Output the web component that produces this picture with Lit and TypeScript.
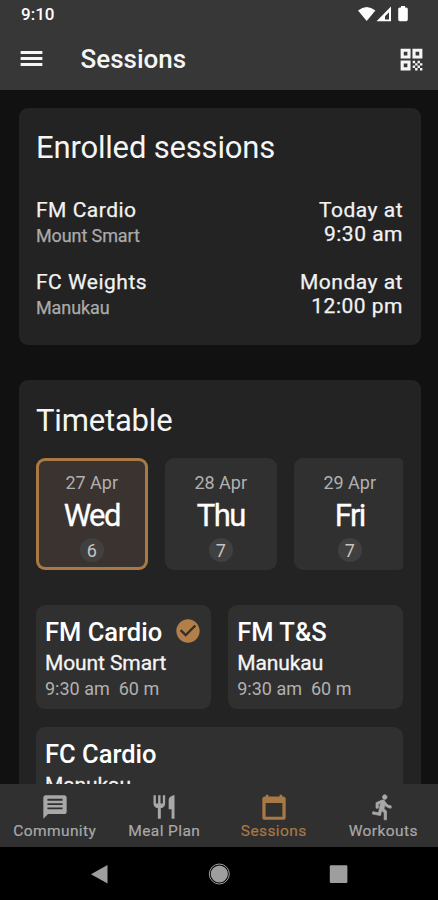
import { LitElement, html, css, svg } from "lit";
import { customElement, property } from "lit/decorators.js";
import { classMap } from "lit/directives/class-map.js";

const paths: Record<string, unknown> = {
  menu: svg`<path d="M3 18.3h18v-2.6H3v2.6zm0-5h18v-2.6H3v2.6zm0-7.6v2.6h18V5.7H3z"/>`,
  qr: svg`<path fill-rule="evenodd" d="M3 3h8.2v8.2H3zM5.6 5.6v3h3v-3zM12.8 3H21v8.2h-8.2zM15.4 5.6v3h3v-3zM3 12.8h8.2V21H3zM5.6 15.4v3h3v-3z"/><path d="M13 13h2v2h-2zM15 15h2v2h-2zM17 13h2v2h-2zM19 15h2v2h-2zM13 17h2v2h-2zM15 19h2v2h-2zM17 17h2v2h-2zM19 19h2v2h-2z"/>`,
  chat: svg`<path d="M20 2H4c-1.1 0-1.99.9-1.99 2L2 22l4-4h14c1.1 0 2-.9 2-2V4c0-1.1-.9-2-2-2zM5.5 5h13v1.6h-13zM5.5 8.7h13v1.6h-13zM5.5 12.4h13v1.6h-13z" fill-rule="evenodd"/>`,
  meal: svg`<path d="M11 9H9V2H7v7H5V2H3v7c0 2.12 1.66 3.84 3.75 3.97V22h2.5v-9.03C11.34 12.84 13 11.12 13 9V2h-2v7zm5-3v8h2.5v8H21V2c-2.76 0-5 2.24-5 4z"/>`,
  calendar: svg`<path fill-rule="evenodd" d="M20 3h-1V1.4h-2.2V3H7.2V1.4H5V3H4c-1.1 0-2 .9-2 2v16c0 1.1.9 2 2 2h16c1.1 0 2-.9 2-2V5c0-1.1-.9-2-2-2zm-.8 17.3H4.8V8.6h14.4z"/>`,
  run: svg`<path stroke="currentColor" stroke-width=".6" d="M13.49 5.48c1.1 0 2-.9 2-2s-.9-2-2-2-2 .9-2 2 .9 2 2 2zm-3.6 13.9l1-4.4 2.1 2v6h2v-7.5l-2.1-2 .6-3c1.3 1.5 3.3 2.5 5.5 2.5v-2c-1.9 0-3.5-1-4.3-2.4l-1-1.6c-.4-.6-1-1-1.7-1-.3 0-.5.1-.8.1l-5.2 2.2v4.7h2v-3.4l1.8-.7-1.6 8.1-4.9-1-.4 2 7 1.4z"/>`,
  check: svg`<path d="M12 2C6.48 2 2 6.48 2 12s4.48 10 10 10 10-4.48 10-10S17.52 2 12 2zm-2 15l-5-5 1.41-1.41L10 14.17l7.59-7.59L19 8l-9 9z"/>`,
};

@customElement("ui-icon")
class UiIcon extends LitElement {
  @property() name = "";
  static styles = css`
    :host { display: block; width: 28px; height: 28px; flex: none; }
    svg { display: block; width: 100%; height: 100%; fill: currentColor; }
  `;
  render() {
    return html`<svg viewBox="0 0 24 24">${paths[this.name]}</svg>`;
  }
}

const enrolled = [
  { name: "FM Cardio", place: "Mount Smart", day: "Today at", time: "9:30 am" },
  { name: "FC Weights", place: "Manukau", day: "Monday at", time: "12:00 pm" },
];
const days = [
  { date: "27 Apr", day: "Wed", count: 6, on: true },
  { date: "28 Apr", day: "Thu", count: 7, on: false },
  { date: "29 Apr", day: "Fri", count: 7, on: false },
];
const classes = [
  { name: "FM Cardio", place: "Mount Smart", time: "9:30 am  60 m", booked: true, wide: false },
  { name: "FM T&S", place: "Manukau", time: "9:30 am  60 m", booked: false, wide: false },
  { name: "FC Cardio", place: "Manukau", time: "", booked: false, wide: true },
];
const tabs = [
  { icon: "chat", label: "Community", on: false },
  { icon: "meal", label: "Meal Plan", on: false },
  { icon: "calendar", label: "Sessions", on: true },
  { icon: "run", label: "Workouts", on: false },
];

@customElement("app-root")
class AppRoot extends LitElement {
  static styles = css`
    :host {
      display: flex; flex-direction: column; height: 900px; overflow: hidden;
      background: #111; color: #f5f5f5;
      font-family: Roboto, "Liberation Sans", sans-serif;
    }
    * { box-sizing: border-box; }
    header { flex: none; height: 90px; background: #373737; }
    .status { display: flex; align-items: center; justify-content: space-between; height: 28px; padding: 0 29px 0 21px; }
    .clock { font-size: 17px; font-weight: 500; line-height: 28px; color: #fff; }
    .signals { display: block; width: 51px; height: 16px; fill: #fff; }
    .bar { display: flex; align-items: center; height: 62px; padding: 0 12px 0 17px; }
    .bar .title { flex: 1; margin-left: 34.5px; font-size: 26px; font-weight: 500; line-height: 64px; }
    .bar .menu { width: 29px; height: 29px; margin-top: -2px; }
    .bar .qr { width: 29px; height: 29px; }
    main { flex: 1; min-height: 0; overflow: hidden; padding: 18px 17.5px 0 18.5px; display: flex; flex-direction: column; gap: 35px; }
    .panel { flex: none; background: #232323; border-radius: 9px; padding: 22px 17.5px 28px; }
    .timetable { padding-top: 23px; }
    h2 { margin: 0; font-size: 31px; font-weight: 400; line-height: 36px; letter-spacing: -.18px; }
    .rows { display: grid; gap: 24px; margin-top: 31px; }
    .row { display: flex; justify-content: space-between; height: 48px; font-size: 21px; line-height: 24px; letter-spacing: .5px; color: #f2f2f2; -webkit-text-stroke: .25px currentColor; }
    .who { padding-top: .5px; }
    .when { text-align: right; padding-top: .5px; }
    .place { font-size: 18px; line-height: 27px; letter-spacing: -.1px; color: #aaa; }
    .days { display: flex; gap: 17.5px; margin-top: 19px; overflow: hidden; border-radius: 4px; }
    .day { flex: none; width: 111.5px; height: 112px; border-radius: 9px; background: #303030; padding-top: 13px; display: flex; flex-direction: column; align-items: center; }
    .day.on { background: #3a3330; box-shadow: inset 0 0 0 3px #a87845; }
    .date { font-size: 18px; line-height: 24px; color: #b0b0b0; }
    .name { margin-top: 4px; font-size: 31px; line-height: 34px; letter-spacing: -1.6px; color: #fff; -webkit-text-stroke: .3px currentColor; }
    .count { margin-top: 5px; width: 24px; height: 24px; border-radius: 50%; background: #404040; font-size: 18px; line-height: 25px; text-align: center; color: #c4c4c4; }
    .classes { display: grid; grid-template-columns: 1fr 1fr; gap: 17.5px; margin-top: 35px; }
    .class { position: relative; height: 104px; border-radius: 9px; background: #303030; padding: 12px 9px 0; }
    .wide { grid-column: span 2; }
    .cname { font-size: 25.5px; font-weight: 500; line-height: 30px; color: #fff; }
    .cplace { margin-top: 3px; font-size: 21px; line-height: 26px; letter-spacing: -.1px; -webkit-text-stroke: .3px currentColor; }
    .ctime { margin-top: 1px; font-size: 18px; line-height: 24px; color: #b0b0b0; white-space: pre; }
    .check { position: absolute; top: 12px; right: 8.5px; color: #b27f49; }
    nav { flex: none; display: grid; grid-template-columns: repeat(4, 1fr); height: 63px; background: #303030; }
    .tab { display: flex; flex-direction: column; align-items: center; padding-top: 9px; color: #a8a8a8; font-size: 15.5px; line-height: 20px; letter-spacing: .4px; -webkit-text-stroke: .2px currentColor; }
    .tab.on { color: #a87845; }
    .system { flex: none; height: 53px; background: #000; }
    .system svg { display: block; width: 438px; height: 53px; fill: #9e9e9e; }
  `;
  render() {
    return html`
      <header>
        <div class="status">
          <span class="clock">9:10</span>
          <svg class="signals" viewBox="0 0 51 16">
            <path d="M0 4.6Q8.7-2.8 17.4 4.6L8.7 15z"/>
            <path fill-rule="evenodd" d="M33 .5v14.7H18.5zM31 6.2L27 10.2v3.4h4z"/>
            <path d="M43 0h4v1.4h1.2q1.6 0 1.6 1.6v10.6q0 1.6-1.6 1.6h-6.4q-1.6 0-1.6-1.6V3q0-1.6 1.6-1.6H43z"/>
          </svg>
        </div>
        <div class="bar">
          <ui-icon class="menu" name="menu"></ui-icon>
          <span class="title">Sessions</span>
          <ui-icon class="qr" name="qr"></ui-icon>
        </div>
      </header>
      <main>
        <section class="panel">
          <h2>Enrolled sessions</h2>
          <div class="rows">
            ${enrolled.map((e) => html`<div class="row">
              <div class="who"><div>${e.name}</div><div class="place">${e.place}</div></div>
              <div class="when"><div>${e.day}</div><div>${e.time}</div></div>
            </div>`)}
          </div>
        </section>
        <section class="panel timetable">
          <h2>Timetable</h2>
          <div class="days">
            ${days.map((d) => html`<div class=${classMap({ day: true, on: d.on })}>
              <div class="date">${d.date}</div><div class="name">${d.day}</div><div class="count">${d.count}</div>
            </div>`)}
          </div>
          <div class="classes">
            ${classes.map((c) => html`<div class=${classMap({ class: true, wide: c.wide })}>
              <div class="cname">${c.name}</div><div class="cplace">${c.place}</div>
              ${c.time ? html`<div class="ctime">${c.time}</div>` : ""}
              ${c.booked ? html`<ui-icon class="check" name="check"></ui-icon>` : ""}
            </div>`)}
          </div>
        </section>
      </main>
      <nav>
        ${tabs.map((t) => html`<div class=${classMap({ tab: true, on: t.on })}>
          <ui-icon name=${t.icon}></ui-icon><span>${t.label}</span>
        </div>`)}
      </nav>
      <div class="system">
        <svg viewBox="0 0 438 53">
          <path d="M107.5 18v18.5L91 27.2z"/>
          <circle cx="219.3" cy="27" r="8.6"/>
          <circle cx="219.3" cy="27" r="10" fill="none" stroke="#9e9e9e" stroke-width="1"/>
          <rect x="329.8" y="18.3" width="17.6" height="17.6" rx="1.2"/>
        </svg>
      </div>
    `;
  }
}
